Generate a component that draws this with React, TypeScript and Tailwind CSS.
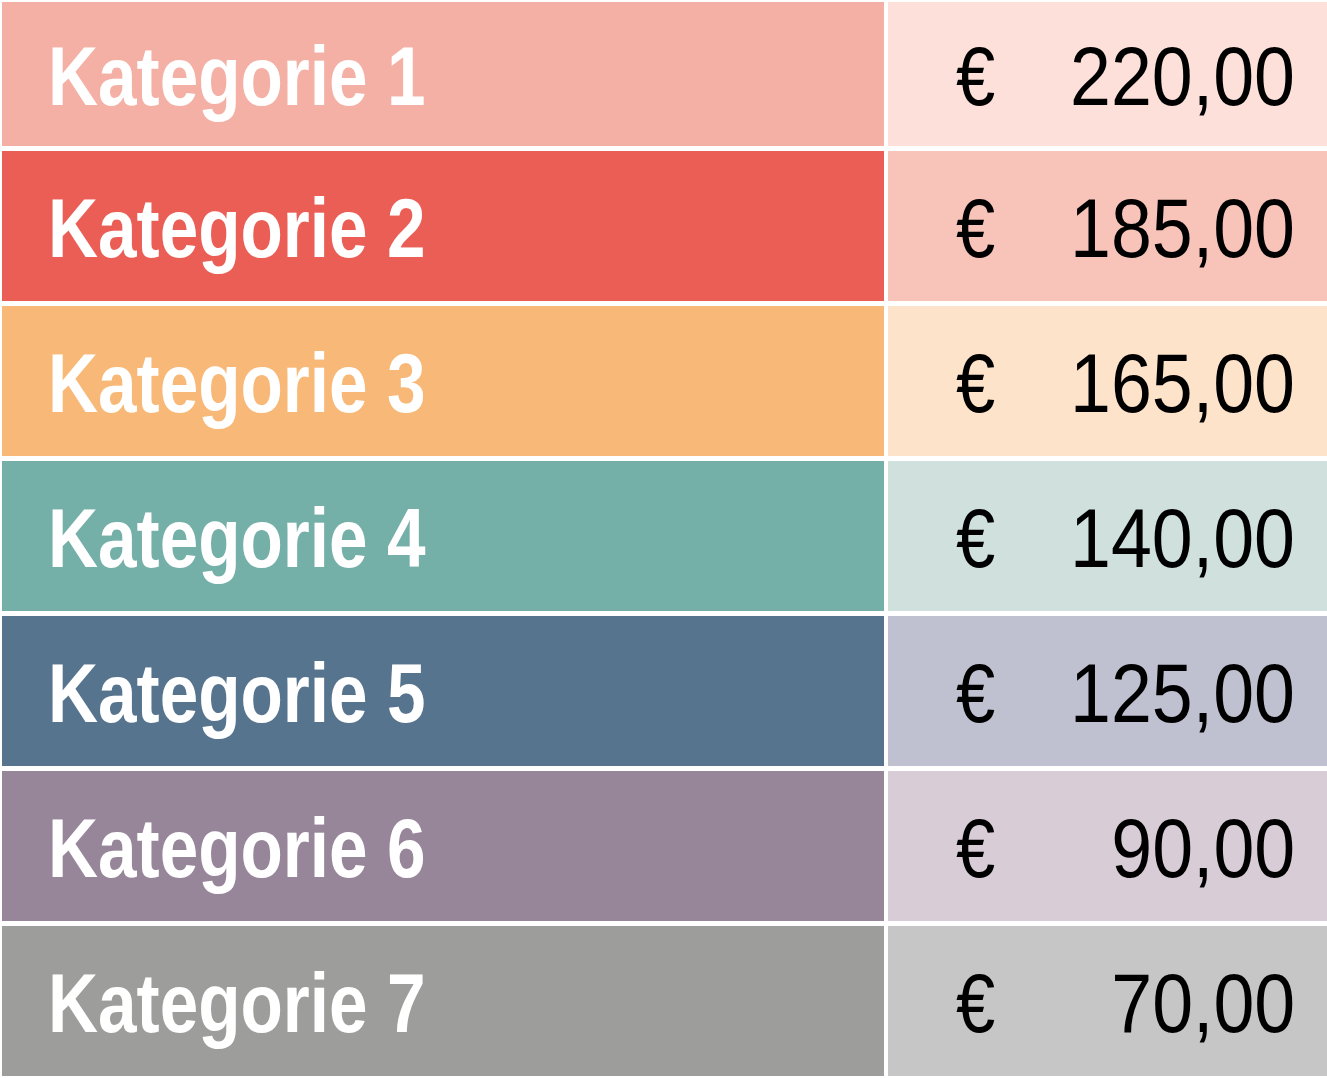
const rows = [
  { label: 'Kategorie 1', amount: '220,00', left: 'bg-[#f4b0a4]', right: 'bg-[#fce0d9]', h: 'h-[144px]' },
  { label: 'Kategorie 2', amount: '185,00', left: 'bg-[#eb5e55]', right: 'bg-[#f8c4b9]', h: 'h-[150px]' },
  { label: 'Kategorie 3', amount: '165,00', left: 'bg-[#f8b877]', right: 'bg-[#fee3cb]', h: 'h-[150px]' },
  { label: 'Kategorie 4', amount: '140,00', left: 'bg-[#74afa8]', right: 'bg-[#cfe0dd]', h: 'h-[150px]' },
  { label: 'Kategorie 5', amount: '125,00', left: 'bg-[#57748f]', right: 'bg-[#bfc1d0]', h: 'h-[150px]' },
  { label: 'Kategorie 6', amount: '90,00', left: 'bg-[#978699]', right: 'bg-[#d8ccd6]', h: 'h-[150px]' },
  { label: 'Kategorie 7', amount: '70,00', left: 'bg-[#9d9d9b]', right: 'bg-[#c6c6c6]', h: 'h-[150px]' },
]

export default function App() {
  return (
    <div
      className="w-[1327px] h-[1078px] bg-white pt-[2px] pl-[2px] flex flex-col gap-[5px] overflow-hidden"
      style={{ fontFamily: '"Liberation Sans", Arial, sans-serif' }}
    >
      {rows.map(row => (
        <div key={row.label} className={`flex gap-[4px] ${row.h}`}>
          {/* Category name */}
          <div className={`w-[882px] flex items-center pl-[46px] pt-[4px] ${row.left}`}>
            <span className="inline-block origin-left scale-x-[0.825] text-white text-[84px] font-bold leading-none whitespace-nowrap">
              {row.label}
            </span>
          </div>
          {/* Amount */}
          <div className={`flex-1 flex items-center pt-[4px] pr-[32px] ${row.right}`}>
            <span className="inline-block origin-left scale-x-[0.84] text-black text-[84px] leading-none ml-[68px]">€</span>
            <span className="flex-1 flex justify-end">
              <span className="inline-block origin-right scale-x-[0.875] text-black text-[84px] leading-none whitespace-nowrap">
                {row.amount}
              </span>
            </span>
          </div>
        </div>
      ))}
    </div>
  )
}
